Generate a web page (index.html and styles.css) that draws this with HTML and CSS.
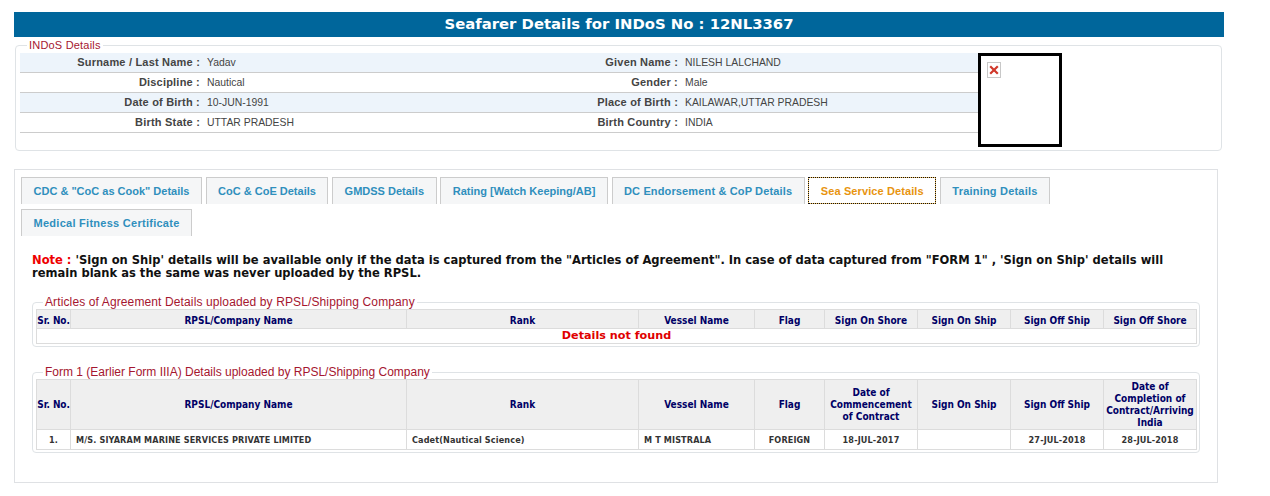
FILE: index.html
```html
<!DOCTYPE html>
<html lang="en">
<head>
<meta charset="utf-8">
<title>Seafarer Details</title>
<link rel="stylesheet" href="styles.css">
</head>
<body>
<div class="page">
  <h1 class="banner">Seafarer Details for INDoS No : 12NL3367</h1>
  <fieldset class="indos">
    <legend>INDoS Details</legend>
    <div class="indos-body">
      <div class="info">
        <div class="info-row shade"><span class="k">Surname / Last Name :</span><span class="v">Yadav</span><span class="k k2">Given Name :</span><span class="v">NILESH LALCHAND</span></div>
        <div class="info-row"><span class="k">Discipline :</span><span class="v">Nautical</span><span class="k k2">Gender :</span><span class="v">Male</span></div>
        <div class="info-row shade"><span class="k">Date of Birth :</span><span class="v">10-JUN-1991</span><span class="k k2">Place of Birth :</span><span class="v">KAILAWAR,UTTAR PRADESH</span></div>
        <div class="info-row"><span class="k">Birth State :</span><span class="v">UTTAR PRADESH</span><span class="k k2">Birth Country :</span><span class="v">INDIA</span></div>
      </div>
      <div class="photo">
        <span class="broken"><svg width="12" height="12" viewBox="0 0 12 12"><path d="M2.2 2.2 9.8 9.8M9.8 2.2 2.2 9.8" stroke="#d0392b" stroke-width="2.2" fill="none"/></svg></span>
      </div>
    </div>
  </fieldset>

  <section class="panel">
    <nav class="tabs">
      <a class="tab">CDC &amp; "CoC as Cook" Details</a>
      <a class="tab">CoC &amp; CoE Details</a>
      <a class="tab">GMDSS Details</a>
      <a class="tab">Rating [Watch Keeping/AB]</a>
      <a class="tab tab-wide">DC Endorsement &amp; CoP Details</a>
      <a class="tab tab-sea active">Sea Service Details</a>
      <a class="tab tab-training">Training Details</a>
      <a class="tab tab-wider">Medical Fitness Certificate</a>
    </nav>
    <p class="note"><span class="note-label">Note :</span> 'Sign on Ship' details will be available only if the data is captured from the "Articles of Agreement". In case of data captured from "FORM 1" , 'Sign on Ship' details will remain blank as the same was never uploaded by the RPSL.</p>

    <fieldset class="group first">
      <legend>Articles of Agreement Details uploaded by RPSL/Shipping Company</legend>
      <table class="grid">
        <colgroup><col class="c1"><col class="c2"><col class="c3"><col class="c4"><col class="c5"><col class="c6"><col class="c7"><col class="c8"><col class="c9"></colgroup>
        <thead><tr><th>Sr. No.</th><th>RPSL/Company Name</th><th>Rank</th><th>Vessel Name</th><th>Flag</th><th>Sign On Shore</th><th>Sign On Ship</th><th>Sign Off Ship</th><th>Sign Off Shore</th></tr></thead>
        <tbody><tr><td colspan="9" class="empty">Details not found</td></tr></tbody>
      </table>
    </fieldset>

    <fieldset class="group second">
      <legend>Form 1 (Earlier Form IIIA) Details uploaded by RPSL/Shipping Company</legend>
      <table class="grid">
        <colgroup><col class="c1"><col class="c2"><col class="c3"><col class="c4"><col class="c5"><col class="c6"><col class="c7"><col class="c8"><col class="c9"></colgroup>
        <thead><tr><th>Sr. No.</th><th>RPSL/Company Name</th><th>Rank</th><th>Vessel Name</th><th>Flag</th><th>Date of Commencement of Contract</th><th>Sign On Ship</th><th>Sign Off Ship</th><th>Date of Completion of Contract/Arriving India</th></tr></thead>
        <tbody><tr><td class="ctr">1.</td><td class="pad">M/S. SIYARAM MARINE SERVICES PRIVATE LIMITED</td><td class="pad">Cadet(Nautical Science)</td><td class="pad">M T MISTRALA</td><td class="ctr">FOREIGN</td><td class="ctr">18-JUL-2017</td><td class="ctr"></td><td class="ctr">27-JUL-2018</td><td class="ctr">28-JUL-2018</td></tr></tbody>
      </table>
    </fieldset>
  </section>
</div>
</body>
</html>
```
FILE: styles.css
```css
* { box-sizing: border-box; }
html, body { margin: 0; padding: 0; background: #fff; }
body { font-family: "Liberation Sans", Arial, sans-serif; color: #333; }
.page { width: 1270px; height: 496px; padding: 12px 0 0 14px; overflow: hidden; }
.banner { margin: 0; width: 1210px; height: 25px; background: #00669b; color: #fff; font: bold 14.85px/25px "DejaVu Sans", sans-serif; text-align: center; }
fieldset { margin: 0; padding: 0; min-width: 0; }
legend { padding: 0 2px; color: #a5162f; font-family: "Liberation Sans", Arial, sans-serif; font-size: 11px; line-height: 12px; letter-spacing: .2px; }

.indos { width: 1207px; height: 112px; margin: 2px 0 0 1px; border: 1px solid #dfe3e6; border-radius: 4px; padding: 0 0 0 4px; }
.indos legend { margin-left: 7px; }
.indos-body { display: flex; margin-top: 2px; }
.info { width: 958px; }
.info-row { display: grid; grid-template-columns: 185px 293px 185px 1fr; height: 20px; padding-bottom: 2px; align-items: center; border-bottom: 1px solid #ccc; }
.shade { background: #edf4fb; }
.k { text-align: right; color: #444; font-weight: bold; font-size: 11px; letter-spacing: .2px; padding-right: 5px; }
.v { padding: 2px 0 0 2px; color: #444; font-size: 10.4px; }
.photo { width: 84px; height: 94px; border: 3px solid #000; background: #fff; padding: 6px; }
.broken { display: flex; align-items: center; justify-content: center; width: 14px; height: 16px; border: 1px solid #c8c8c8; }

.panel { width: 1204px; height: 314px; margin-top: 18px; border: 1px solid #dfe1e4; padding: 7px 0 0 6px; }
.tabs { display: flex; flex-wrap: wrap; column-gap: 3.7px; row-gap: 5px; width: 1100px; }
.tab { display: block; height: 27px; padding: 0 11.5px; border: 1px solid #ccc; border-bottom: 0; background: #f5f6f7; color: #2f8fbd; font-size: 11px; line-height: 27px; font-weight: bold; }
.tab-wide { letter-spacing: .14px; }
.tab-sea { letter-spacing: .1px; }
.tab-training { letter-spacing: .2px; }
.tab-wider { letter-spacing: .27px; }
.tab.active { background: #fff; color: #e8940f; border: 1px solid #f0c060; outline: 1px dotted #111; outline-offset: -1px; }
.note { margin: 18px 0 0 11px; width: 1140px; font: bold 11.52px/13px "DejaVu Sans", sans-serif; color: #111; }
.note-label { color: #ee0000; }

.group { width: 1168px; margin-left: 11px; border: 1px solid #dfe3e6; border-radius: 4px; padding: 0 3px 2px 3px; }
.group legend { margin-left: 7px; font-size: 12px; line-height: 14px; letter-spacing: 0; }
.first legend { letter-spacing: .12px; }
.first { margin-top: 15px; }
.second { margin-top: 18px; }
.grid { width: 1160px; border-collapse: collapse; table-layout: fixed; border: 1px solid #dcdcdc; font-family: "DejaVu Sans", sans-serif; font-stretch: condensed; }
.c1 { width: 34px; } .c2 { width: 336px; } .c3 { width: 232px; } .c4 { width: 116px; } .c5 { width: 70px; } .c6 { width: 93px; } .c7 { width: 93px; } .c8 { width: 93px; } .c9 { width: 93px; }
th { background: #efefef; border: 1px solid #dcdcdc; color: #000066; font-size: 10px; line-height: 12px; padding: 1px 0 0; height: 19px; }
.first th { padding-top: 3px; }
th:first-child { white-space: nowrap; letter-spacing: -.1px; }
td { border: 1px solid #dcdcdc; font-size: 9px; font-weight: bold; letter-spacing: .14px; color: #333; height: 20px; padding: 0; }
.ctr { text-align: center; }
.pad { padding-left: 5px; }
.empty { height: 14px; text-align: center; color: #e00000; font: bold 11.2px/14px "DejaVu Sans", sans-serif; letter-spacing: 0; }
```
